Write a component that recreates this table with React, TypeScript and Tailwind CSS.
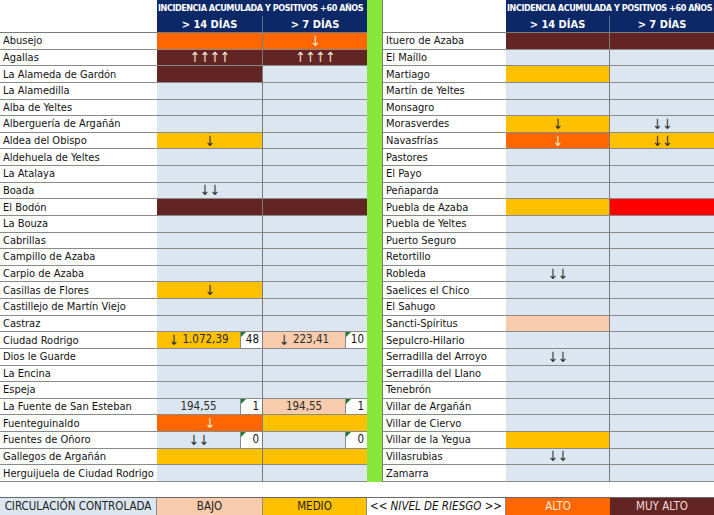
import React from "react";

type C = { bg: string; t?: string; fg?: string; box?: string };

const L = "bg-[#dce6f1]";
const O = "bg-[#ff6600]";
const A = "bg-[#ffc000]";
const M = "bg-[#632523]";
const P = "bg-[#f8cbad]";
const R = "bg-[#ff0000]";
const W = "text-[#fde9d9]";
const D = "text-[#2b2b2b]";

const l: C = { bg: L };

type Row = [string, C, C];

const leftRows: Row[] = [
  ["Abusejo", { bg: O }, { bg: O, t: "↓", fg: W }],
  ["Agallas", { bg: M, t: "↑↑↑↑", fg: W }, { bg: M, t: "↑↑↑↑", fg: W }],
  ["La Alameda de Gardón", { bg: M }, l],
  ["La Alamedilla", l, l],
  ["Alba de Yeltes", l, l],
  ["Alberguería de Argañán", l, l],
  ["Aldea del Obispo", { bg: A, t: "↓", fg: D }, l],
  ["Aldehuela de Yeltes", l, l],
  ["La Atalaya", l, l],
  ["Boada", { bg: L, t: "↓↓", fg: D }, l],
  ["El Bodón", { bg: M }, { bg: M }],
  ["La Bouza", l, l],
  ["Cabrillas", l, l],
  ["Campillo de Azaba", l, l],
  ["Carpio de Azaba", l, l],
  ["Casillas de Flores", { bg: A, t: "↓", fg: D }, l],
  ["Castillejo de Martín Viejo", l, l],
  ["Castraz", l, l],
  ["Ciudad Rodrigo", { bg: A, t: "↓ 1.072,39", fg: D, box: "48" }, { bg: P, t: "↓ 223,41", fg: D, box: "10" }],
  ["Dios le Guarde", l, l],
  ["La Encina", l, l],
  ["Espeja", l, l],
  ["La Fuente de San Esteban", { bg: L, t: "194,55", fg: D, box: "1" }, { bg: P, t: "194,55", fg: D, box: "1" }],
  ["Fuenteguinaldo", { bg: O, t: "↓", fg: W }, { bg: A }],
  ["Fuentes de Oñoro", { bg: L, t: "↓↓", fg: D, box: "0" }, { bg: L, box: "0" }],
  ["Gallegos de Argañán", { bg: A }, { bg: A }],
  ["Herguijuela de Ciudad Rodrigo", l, l],
];

const rightRows: Row[] = [
  ["Ituero de Azaba", { bg: M }, { bg: M }],
  ["El Maíllo", l, l],
  ["Martiago", { bg: A }, l],
  ["Martín de Yeltes", l, l],
  ["Monsagro", l, l],
  ["Morasverdes", { bg: A, t: "↓", fg: D }, { bg: L, t: "↓↓", fg: D }],
  ["Navasfrías", { bg: O, t: "↓", fg: W }, { bg: A, t: "↓↓", fg: D }],
  ["Pastores", l, l],
  ["El Payo", l, l],
  ["Peñaparda", l, l],
  ["Puebla de Azaba", { bg: A }, { bg: R }],
  ["Puebla de Yeltes", l, l],
  ["Puerto Seguro", l, l],
  ["Retortillo", l, l],
  ["Robleda", { bg: L, t: "↓↓", fg: D }, l],
  ["Saelices el Chico", l, l],
  ["El Sahugo", l, l],
  ["Sancti-Spíritus", { bg: P }, l],
  ["Sepulcro-Hilario", l, l],
  ["Serradilla del Arroyo", { bg: L, t: "↓↓", fg: D }, l],
  ["Serradilla del Llano", l, l],
  ["Tenebrón", l, l],
  ["Villar de Argañán", l, l],
  ["Villar de Ciervo", l, l],
  ["Villar de la Yegua", { bg: A }, l],
  ["Villasrubias", { bg: L, t: "↓↓", fg: D }, l],
  ["Zamarra", l, l],
];

function Txt({ t }: { t: string }) {
  const m = t.match(/^([↓↑]+)(.*)$/);
  if (!m) return <span>{t}</span>;
  return (
    <>
      <span className="text-[14px] tracking-[-0.5px] leading-none">{m[1]}</span>
      {m[2] && <span className="ml-[4px]">{m[2].trim()}</span>}
    </>
  );
}

function DataCell({ c, w, last }: { c: C; w: string; last?: boolean }) {
  return (
    <div className={`${w} ${c.bg} flex h-full border-b border-[#8a8a8a] ${last ? "" : "border-r border-r-[#7a7a7a]"}`}>
      <div className={`flex-1 flex items-center justify-center leading-none text-[11.5px] ${c.fg ?? ""}`}>{c.t ? <Txt t={c.t} /> : null}</div>
      {c.box !== undefined && (
        <div className="relative w-[22px] h-full bg-white border-l border-[#8a8a8a] flex items-center justify-end pr-[3px] text-[#111] leading-none text-[11.5px]">
          <div className="absolute left-0 top-0 w-0 h-0 border-t-[5px] border-r-[5px] border-t-[#1e7b34] border-r-transparent" />
          {c.box}
        </div>
      )}
    </div>
  );
}

function Block({ rows, nameW, c1W, c2W, leftBorder }: { rows: Row[]; nameW: string; c1W: string; c2W: string; leftBorder?: boolean }) {
  return (
    <div className={`flex flex-col h-full ${leftBorder ? "border-l border-[#7a7a7a]" : ""}`}>
      <div className="flex h-[16px]">
        <div className={`${nameW} bg-white`} />
        <div className="flex-1 bg-[#0c2866] text-white font-bold text-[9px] tracking-[-0.45px] whitespace-nowrap overflow-hidden flex items-center pl-[1px] leading-none">
          INCIDENCIA ACUMULADA Y POSITIVOS +60 AÑOS
        </div>
      </div>
      <div className="flex h-[17px] border-b border-[#7a7a7a]">
        <div className={`${nameW} bg-white`} />
        <div className={`${c1W} bg-[#0c2866] text-white font-bold text-[11px] flex items-center justify-center leading-none border-r border-[#5a6a8a]`}>&gt; 14 DÍAS</div>
        <div className={`${c2W} bg-[#0c2866] text-white font-bold text-[11px] flex items-center justify-center leading-none`}>&gt; 7 DÍAS</div>
      </div>
      <div className="flex-1 flex flex-col">
        {rows.map(([name, a, b]) => (
          <div key={name} className="flex flex-1">
            <div className={`${nameW} border-b border-[#8a8a8a] flex items-center pl-[3px] text-[#111] whitespace-nowrap overflow-hidden leading-none`}>{name}</div>
            <DataCell c={a} w={c1W} />
            <DataCell c={b} w={c2W} last />
          </div>
        ))}
      </div>
    </div>
  );
}

export default function App() {
  return (
    <div className="w-[714px] h-[515px] bg-white font-['DejaVu_Sans_Condensed','DejaVu_Sans',sans-serif] text-[11px] overflow-hidden">
      <div className="flex h-[482px]">
        <div className="w-[367px]">
          <Block rows={leftRows} nameW="w-[157px]" c1W="w-[106px]" c2W="w-[104px]" />
        </div>
        <div className="w-[15px] bg-[#86e83a]" />
        <div className="w-[332px]">
          <Block rows={rightRows} nameW="w-[123px]" c1W="w-[104px]" c2W="w-[104px]" leftBorder />
        </div>
      </div>
      <div className="h-[15px]" />
      <div className="flex h-[18px] border-t border-[#6a6a6a] text-[11.5px] leading-none">
        <div className="w-[157px] bg-[#dce6f1] flex items-center justify-center text-[#222] border-r border-[#8a8a8a]">CIRCULACIÓN CONTROLADA</div>
        <div className="w-[106px] bg-[#f8cbad] flex items-center justify-center text-[#222] border-r border-[#8a8a8a]">BAJO</div>
        <div className="w-[104px] bg-[#ffc000] flex items-center justify-center text-[#222] border-r border-[#8a8a8a]">MEDIO</div>
        <div className="w-[139px] bg-white flex items-center justify-center italic text-[#111] border-r border-[#8a8a8a]">&lt;&lt; NIVEL DE RIESGO &gt;&gt;</div>
        <div className="w-[104px] bg-[#ff6600] flex items-center justify-center text-[#fde9d9]">ALTO</div>
        <div className="w-[104px] bg-[#632523] flex items-center justify-center text-[#f2dcdb]">MUY ALTO</div>
      </div>
    </div>
  );
}
